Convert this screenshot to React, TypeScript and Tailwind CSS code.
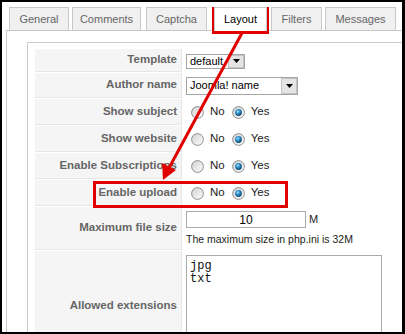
import React from "react";

const font = { fontFamily: '"Liberation Sans", Arial, sans-serif' };

function Radio({ checked }: { checked?: boolean }) {
  return (
    <svg width="13" height="13" viewBox="0 0 13 13" className="shrink-0">
      <defs>
        <linearGradient id="rbg" x1="0" y1="0" x2="1" y2="1">
          <stop offset="0" stopColor="#cfcfcf" />
          <stop offset="1" stopColor="#ffffff" />
        </linearGradient>
        <radialGradient id="rdot" cx="0.4" cy="0.35" r="0.7">
          <stop offset="0" stopColor="#9fe0ff" />
          <stop offset="0.45" stopColor="#2a8cc4" />
          <stop offset="1" stopColor="#0b3c62" />
        </radialGradient>
      </defs>
      <circle cx="6.5" cy="6.5" r="5.9" fill="url(#rbg)" stroke="#8f8f8f" strokeWidth="1" />
      {checked && <circle cx="6.5" cy="6.5" r="3.4" fill="url(#rdot)" />}
    </svg>
  );
}

function YesNo() {
  return (
    <div className="flex items-center text-[11.5px] text-[#222]">
      <span className="ml-[5px]"><Radio /></span>
      <span className="ml-[6px]">No</span>
      <span className="ml-[7px]"><Radio checked /></span>
      <span className="ml-[6px]">Yes</span>
    </div>
  );
}

function Select({ value, width, height }: { value: string; width: number; height: number }) {
  return (
    <div
      className="flex items-center justify-between bg-white border border-[#a5a5a5] text-[11px] text-black"
      style={{ width, height }}
    >
      <span className="pl-[3px] leading-none whitespace-nowrap">{value}</span>
      <span className="h-full w-[16px] flex items-center justify-center bg-[#e4e4e4] border border-[#c4c4c4]">
        <svg width="7" height="4" viewBox="0 0 7 4">
          <path d="M0 0h7L3.5 4z" fill="#000" />
        </svg>
      </span>
    </div>
  );
}

function Row({ label, h, children, top }: { label: string; h: number; children?: React.ReactNode; top?: boolean }) {
  return (
    <div className="flex" style={{ height: h }}>
      <div className="w-[147px] shrink-0 bg-[#f5f5f5] border-b border-r border-[#e6e6e6] flex items-center justify-end pr-[4px] text-[11.5px] font-bold text-[#666]">
        {label}
      </div>
      <div className={"flex-1 pl-[4px] flex " + (top ? "flex-col pt-[4px]" : "items-center")}>{children}</div>
    </div>
  );
}

const tabs = [
  { name: "General", w: 60, ml: 0 },
  { name: "Comments", w: 69, ml: 3 },
  { name: "Captcha", w: 61, ml: 5 },
  { name: "Layout", w: 53, ml: 7, active: true },
  { name: "Filters", w: 51, ml: 4 },
  { name: "Messages", w: 71, ml: 3 },
];

export default function App() {
  return (
    <div className="relative w-[405px] h-[334px] overflow-hidden bg-white border-l-2 border-t-2 border-b-2 border-r-[3px] border-black" style={font}>
      <div className="pt-[5px] pl-[7px] flex items-end h-[28px]">
        {tabs.map((t) => (
          <div
            key={t.name}
            className={
              "flex items-center justify-center border-t border-l border-r border-[#c8c8c8] text-[11px] " +
              (t.active ? "h-[24px] -mb-px bg-white text-black relative z-10" : "h-[23px] bg-[#f0f0f0] text-[#666]")
            }
            style={{ width: t.w, marginLeft: t.ml }}
          >
            {t.name}
          </div>
        ))}
      </div>
      <div className="ml-[4px] w-[420px] h-[400px] border-t border-l border-[#c8c8c8] pt-[11px] pl-[20px]">
        <div className="border-t border-l border-[#cccccc] h-[380px] pt-[6px] pl-[7px]">
          <div className="flex flex-col gap-[1px] w-[380px]">
            <Row label="Template" h={23}>
              <div className="mt-[1px]"><Select value="default" width={59} height={15} /></div>
            </Row>
            <Row label="Author name" h={25}>
              <Select value="Joomla! name" width={112} height={18} />
            </Row>
            <Row label="Show subject" h={26}><YesNo /></Row>
            <Row label="Show website" h={26}><YesNo /></Row>
            <Row label="Enable Subscriptions" h={26}><YesNo /></Row>
            <Row label="Enable upload" h={26}><YesNo /></Row>
            <Row label="Maximum file size" h={43} top>
              <div className="flex items-center">
                <div className="w-[120px] h-[17px] border border-[#aaaaaa] bg-white flex items-center justify-center text-[12px] text-black">10</div>
                <span className="ml-[3px] text-[11px] text-[#222]">M</span>
              </div>
              <div className="mt-[6px] text-[10.5px] text-[#222] leading-none whitespace-nowrap">The maximum size in php.ini is 32M</div>
            </Row>
            <Row label="Allowed extensions" h={110} top>
              <div
                className="w-[196px] h-[102px] border border-[#aaaaaa] bg-white pl-[3px] pt-[4px] text-[12px] leading-[13px] text-[#111] whitespace-pre"
                style={{ fontFamily: '"Liberation Mono", "Courier New", monospace' }}
              >
                {"jpg\ntxt"}
              </div>
            </Row>
          </div>
        </div>
      </div>

      {/* red annotations */}
      <div className="absolute -left-[2px] -top-[2px] w-[405px] h-[334px] pointer-events-none">
        <div className="absolute left-[212px] top-[7px] w-[57px] h-[27px] border-[3px] border-[#e00000]" />
        <div className="absolute left-[93px] top-[181px] w-[195px] h-[27px] border-[3px] border-[#e00000]" />
        <svg className="absolute left-0 top-0" width="405" height="334">
          <line x1="242" y1="33" x2="169" y2="168" stroke="#e00000" strokeWidth="3" />
          <polygon points="163,180 176,170 162,163" fill="#e00000" />
        </svg>
      </div>
    </div>
  );
}
